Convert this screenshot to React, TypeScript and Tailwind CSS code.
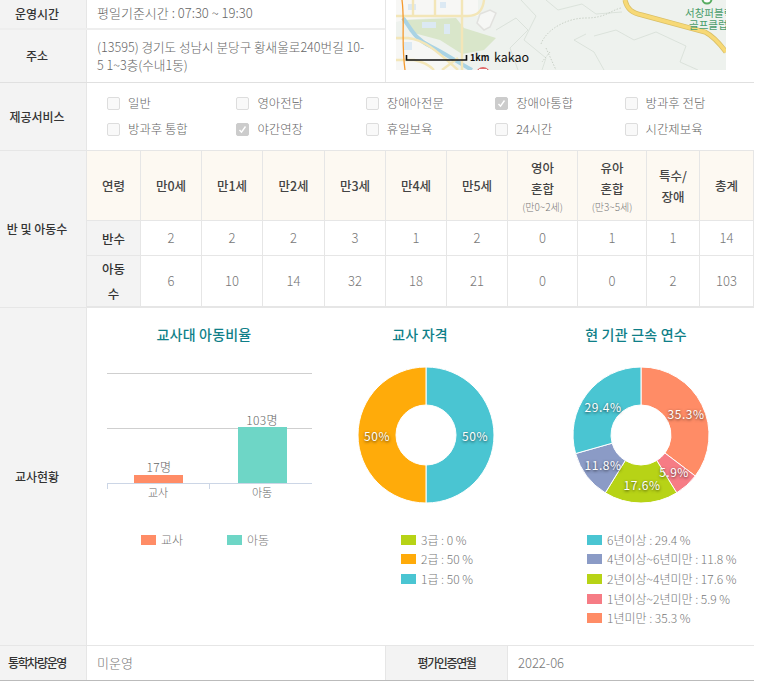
const services = [
  ["일반", false],
  ["영아전담", false],
  ["장애아전문", false],
  ["장애아통합", true],
  ["방과후 전담", false],
  ["방과후 통합", false],
  ["야간연장", true],
  ["휴일보육", false],
  ["24시간", false],
  ["시간제보육", false],
] as const;

const ages = ["만0세", "만1세", "만2세", "만3세", "만4세", "만5세"];
const classes = [2, 2, 2, 3, 1, 2, 0, 1, 1, 14];
const kids = [6, 10, 14, 32, 18, 21, 0, 0, 2, 103];

const qual = [
  { label: "3급 : 0 %", value: 0, color: "#b7d316" },
  { label: "2급 : 50 %", value: 50, color: "#ffab0a" },
  { label: "1급 : 50 %", value: 50, color: "#4ac5d2" },
];

const years = [
  { label: "6년이상 : 29.4 %", value: 29.4, color: "#4ac5d2" },
  { label: "4년이상~6년미만 : 11.8 %", value: 11.8, color: "#8b9bc6" },
  { label: "2년이상~4년미만 : 17.6 %", value: 17.6, color: "#b7d316" },
  { label: "1년이상~2년미만 : 5.9 %", value: 5.9, color: "#f67c85" },
  { label: "1년미만 : 35.3 %", value: 35.3, color: "#ff8c66" },
];

const point = (cx: number, cy: number, r: number, pct: number) => {
  const a = (pct / 100) * Math.PI * 2;
  return [cx + r * Math.sin(a), cy - r * Math.cos(a)];
};

const slice = (cx: number, cy: number, from: number, to: number) => {
  const R = 68;
  const r = 30;
  const big = to - from > 50 ? 1 : 0;
  const [x1, y1] = point(cx, cy, R, from);
  const [x2, y2] = point(cx, cy, R, to);
  const [x3, y3] = point(cx, cy, r, to);
  const [x4, y4] = point(cx, cy, r, from);
  return `M${x1} ${y1}A${R} ${R} 0 ${big} 1 ${x2} ${y2}L${x3} ${y3}A${r} ${r} 0 ${big} 0 ${x4} ${y4}Z`;
};

const Donut = ({ cx, parts }: { cx: number; parts: { value: number; color: string }[] }) => {
  let at = 0;
  return (
    <svg width="216" height="160" className="block">
      {parts.map((p, i) => {
        const from = at;
        at += p.value;
        return <path key={i} d={slice(cx, 75, from, at)} fill={p.color} stroke="#ffffff" strokeWidth="1" />;
      })}
    </svg>
  );
};

const PieLabel = ({ className, children }: { className: string; children: string }) => (
  <span className={`absolute -translate-x-1/2 -translate-y-1/2 text-[12px] leading-none font-normal tracking-[0.5px] text-white [text-shadow:0_1px_3px_rgba(0,0,0,0.7)] ${className}`}>
    {children}
  </span>
);

const Legend = ({ items, className }: { items: { label: string; color: string }[]; className: string }) => (
  <div className={`mt-[12px] flex flex-col gap-[4.7px] ${className}`}>
    {items.map((it) => (
      <div key={it.label} className="flex h-[15px] items-center gap-[5px] text-[12px] font-light whitespace-nowrap text-[#777777]">
        <span className="h-[10px] w-[15px] shrink-0" style={{ background: it.color }} />
        {it.label}
      </div>
    ))}
  </div>
);

const Check = ({ label, on }: { label: string; on: boolean }) => (
  <div className="flex h-[26px] items-center gap-[8px] text-[12.4px] font-light text-[#666666]">
    <span className={`flex h-[13px] w-[13px] items-center justify-center rounded-[2px] border ${on ? "border-[#cccccc] bg-[#cccccc]" : "border-[#dddddd] bg-[#f9f9f9]"}`}>
      {on && (
        <svg width="9" height="9" viewBox="0 0 9 9">
          <path d="M1.5 5l2 2.2L7.5 1.5" fill="none" stroke="#ffffff" strokeWidth="1.4" />
        </svg>
      )}
    </span>
    {label}
  </div>
);

const Th = ({ children }: { children: React.ReactNode }) => (
  <div className="flex flex-col items-center justify-center border-r border-b border-[#e6e6e6] bg-[#fdf9f2] text-center text-[12.5px] leading-[21px] font-medium text-[#444444]">
    {children}
  </div>
);

const Td = ({ children }: { children: React.ReactNode }) => (
  <div className="flex items-center justify-center border-r border-b border-[#e6e6e6] text-[13px] font-light text-[#777777]">
    {children}
  </div>
);

const RowHead = ({ children }: { children: React.ReactNode }) => (
  <div className="flex items-center justify-center border-r border-b border-[#e6e6e6] bg-[#f3f3f3] text-center text-[12.5px] leading-[25px] font-medium text-[#333333]">
    {children}
  </div>
);

const Label = ({ children, className = "" }: { children: React.ReactNode; className?: string }) => (
  <div className={`flex w-[87px] shrink-0 items-center justify-center border-r border-[#e6e6e6] bg-[#f3f3f3] pr-[12px] text-[12px] font-medium whitespace-nowrap text-[#333333] ${className}`}>
    {children}
  </div>
);

const KakaoMap = () => (
  <svg width="330" height="70" viewBox="0 0 330 70" className="block">
    <rect width="330" height="70" fill="#eef2ee" />
    <path d="M0 0H82V16H58L8 20L0 22Z" fill="#f7f7f5" />
    <path d="M0 40H30L62 70H0Z" fill="#f7f7f5" />
    <path d="M8 20L60 18L68 28L100 38L88 50L66 54L44 40L14 32Z" fill="#d9e6ca" />
    <path d="M12 4H20V10H12ZM44 2H50V8H44ZM26 22H40V28H26ZM48 24H54V34H48ZM8 42H16V50H8Z" fill="#dce9f3" />
    <path d="M84 14l10-4 6 3-6 14-6 3-7-7z" fill="#f6f7f5" stroke="#e1e1de" strokeWidth="1.5" />
    <g fill="none" stroke="#d3dbd3" strokeWidth="0.7">
      <path d="M125 0L140 16L128 40L150 58L146 70" />
      <path d="M190 34L178 40L198 52L208 70" />
      <path d="M198 36L220 30L238 40L260 32L290 46L284 62L302 70" />
      <path d="M100 30L120 18L132 30L114 48L122 70" />
      <path d="M150 0L162 10L186 4L200 14L226 12" />
    </g>
    <path d="M145 44C150 30 170 18 190 18S215 10 225 8" fill="none" stroke="#bfc8bd" strokeWidth="0.8" strokeDasharray="1.5 1.5" />
    <path d="M150 48L160 70M154 52L146 62" fill="none" stroke="#bfc8bd" strokeWidth="0.8" strokeDasharray="1.5 1.5" />
    <path d="M7 18C16 30 18 38 34 46S58 60 76 70" fill="none" stroke="#a9d3e4" strokeWidth="4" />
    <g fill="none" stroke="#f3e6b8" strokeWidth="2.4">
      <path d="M0 16H72C82 16 87 10 88 0" />
      <path d="M17 0V16M39 0V16M66 0V70" />
      <path d="M0 38H12C30 40 44 54 62 70" />
      <path d="M0 60H18C28 62 34 66 38 70" />
      <path d="M46 70L62 58" />
    </g>
    <path d="M229 0C231 9 236 13 246 15L309 32C317 36 324 44 330 52" fill="none" stroke="#d9bf66" strokeWidth="5" />
    <path d="M229 0C231 9 236 13 246 15L309 32C317 36 324 44 330 52" fill="none" stroke="#f7d976" strokeWidth="3.5" />
    <path d="M6 0C9 22 5 40 9 70" fill="none" stroke="#f59a2e" strokeWidth="1.3" />
    <path d="M10.5 55V60H70.5V55" fill="none" stroke="#111111" strokeWidth="1.6" />
    <text x="74" y="61" fontSize="9" fontWeight="700" fill="#111111">1km</text>
    <text x="98" y="62" fontSize="12.5" fill="#111111">kakao</text>
    <circle cx="87" cy="74" r="7" fill="#df6b6b" />
    <rect x="83" y="69" width="8" height="1.6" fill="#ffffff" />
    <circle cx="311" cy="-1" r="4.5" fill="#ffffff" stroke="#59ad62" strokeWidth="2" />
    <text x="289" y="17" fontSize="10.5" fill="#4a9d6c">서창퍼블릭</text>
    <text x="293" y="29" fontSize="10.5" fill="#4a9d6c">골프클럽</text>
  </svg>
);

const BarChart = () => (
  <svg width="216" height="160" viewBox="96 360 216 160" className="block">
    <path d="M107 373.5H312M107 428.5H312" stroke="#cfcfcf" strokeWidth="1" />
    <rect x="134" y="475" width="49" height="8" fill="#ff8c66" />
    <rect x="238" y="427" width="49" height="56" fill="#6ed6c6" />
    <path d="M107 483.5H312M107.5 483V489M209.5 483V489" stroke="#ccd6e6" strokeWidth="1" />
    <g fontSize="12" fontWeight="300" fill="#666666" textAnchor="middle" letterSpacing="0.3">
      <text x="159" y="472">17명</text>
      <text x="262" y="425">103명</text>
    </g>
    <g fontSize="11" fontWeight="300" fill="#666666" textAnchor="middle">
      <text x="158" y="497">교사</text>
      <text x="262" y="497">아동</text>
    </g>
  </svg>
);

const ChartTitle = ({ children }: { children: string }) => (
  <h3 className="h-[52px] pt-[16px] text-center text-[14px] leading-[20px] font-medium tracking-[0.2px] text-[#0f7f88]">{children}</h3>
);

export default function App() {
  return (
    <div className="w-[754px] bg-white font-['Noto_Sans_CJK_KR','Noto_Sans',sans-serif]">
      <div className="flex h-[83px] border-b border-[#e0e0e0]">
        <div className="flex w-[386px] shrink-0 flex-col border-r border-[#e6e6e6]">
          <div className="flex h-[30px] border-b-2 border-[#eeeeee]">
            <Label>운영시간</Label>
            <p className="pl-[10px] text-[13px] leading-[26px] font-light text-[#666666]">평일기준시간 : 07:30 ~ 19:30</p>
          </div>
          <div className="flex flex-1">
            <Label>주소</Label>
            <p className="pt-[8px] pr-[16px] pl-[10px] text-[12.6px] leading-[18px] font-light text-[#666666]">
              (13595) 경기도 성남시 분당구 황새울로240번길 10-5 1~3층(수내1동)
            </p>
          </div>
        </div>
        <div className="pl-[10px]">
          <KakaoMap />
        </div>
      </div>

      <div className="flex h-[68px] border-b border-[#e6e6e6]">
        <Label>제공서비스</Label>
        <div className="grid flex-1 grid-cols-[129.4px_129.4px_129.4px_129.4px_1fr] content-center pl-[20px]">
          {services.map(([label, on]) => (
            <Check key={label} label={label} on={on} />
          ))}
        </div>
      </div>

      <div className="flex h-[157px] border-b border-[#e6e6e6]">
        <Label>반 및 아동수</Label>
        <div className="grid flex-1 grid-cols-[54px_61px_61px_62px_61px_61px_61px_70px_69px_53px_1fr] grid-rows-[70px_35px_1fr]">
          <Th>연령</Th>
          {ages.map((a) => (
            <Th key={a}>{a}</Th>
          ))}
          <Th>
            영아
            <br />
            혼합
            <span className="text-[10px] leading-[16px] font-light text-[#777777]">(만0~2세)</span>
          </Th>
          <Th>
            유아
            <br />
            혼합
            <span className="text-[10px] leading-[16px] font-light text-[#777777]">(만3~5세)</span>
          </Th>
          <Th>
            특수/
            <br />
            장애
          </Th>
          <Th>총계</Th>

          <RowHead>반수</RowHead>
          {classes.map((n, i) => (
            <Td key={i}>{n}</Td>
          ))}

          <RowHead>
            아동
            <br />
            수
          </RowHead>
          {kids.map((n, i) => (
            <Td key={i}>{n}</Td>
          ))}
        </div>
      </div>

      <div className="flex h-[338px] border-b border-[#e6e6e6]">
        <Label>교사현황</Label>
        <div className="grid grid-cols-[216px_216px_216px] pl-[9px]">
          <div>
            <ChartTitle>교사대 아동비율</ChartTitle>
            <BarChart />
            <div className="mt-[12px] flex gap-[40px] pl-[45px] text-[12px] font-light text-[#777777]">
              <div className="flex h-[15px] w-[46px] items-center gap-[5px]">
                <span className="h-[10px] w-[15px] shrink-0 bg-[#ff8c66]" />
                교사
              </div>
              <div className="flex h-[15px] w-[46px] items-center gap-[5px]">
                <span className="h-[10px] w-[15px] shrink-0 bg-[#6ed6c6]" />
                아동
              </div>
            </div>
          </div>
          <div>
            <ChartTitle>교사 자격</ChartTitle>
            <div className="relative">
              <Donut cx={114} parts={qual.slice(2).concat(qual.slice(1, 2))} />
              <PieLabel className="top-[76px] left-[65px]">50%</PieLabel>
              <PieLabel className="top-[76px] left-[163px]">50%</PieLabel>
            </div>
            <Legend items={qual} className="pl-[89px]" />
          </div>
          <div>
            <ChartTitle>현 기관 근속 연수</ChartTitle>
            <div className="relative">
              <Donut cx={113} parts={[...years].reverse()} />
              <PieLabel className="top-[54px] left-[158px]">35.3%</PieLabel>
              <PieLabel className="top-[112px] left-[146px]">5.9%</PieLabel>
              <PieLabel className="top-[125px] left-[114px]">17.6%</PieLabel>
              <PieLabel className="top-[105px] left-[75px]">11.8%</PieLabel>
              <PieLabel className="top-[47px] left-[75px]">29.4%</PieLabel>
            </div>
            <Legend items={years} className="pl-[59px]" />
          </div>
        </div>
      </div>

      <div className="flex h-[35px] border-b border-[#bbbbbb]">
        <Label className="tracking-[-1.4px]">통학차량운영</Label>
        <p className="w-[299px] border-r border-[#e6e6e6] pl-[10px] text-[13px] leading-[34px] font-light text-[#777777]">미운영</p>
        <div className="flex w-[122px] items-center justify-center border-r border-[#e6e6e6] bg-[#f3f3f3] text-[12px] font-medium tracking-[-1.4px] text-[#333333]">
          평가인증연월
        </div>
        <p className="pl-[10px] text-[13px] leading-[34px] font-light text-[#777777]">2022-06</p>
      </div>
    </div>
  );
}
